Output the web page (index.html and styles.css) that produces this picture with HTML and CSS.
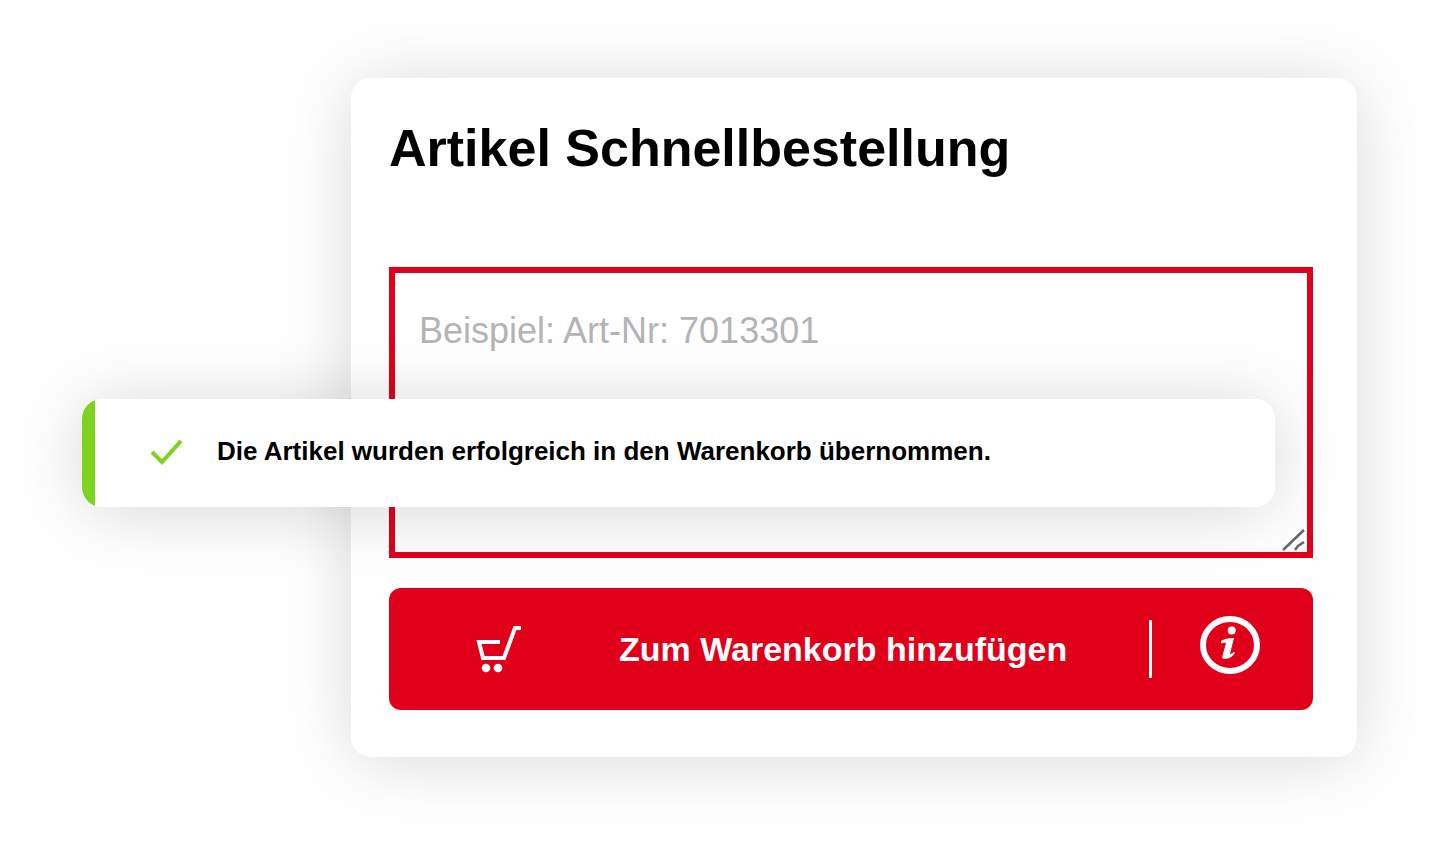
FILE: index.html
```html
<!DOCTYPE html>
<html lang="de">
<head>
  <meta charset="UTF-8">
  <meta name="viewport" content="width=device-width, initial-scale=1">
  <title>Artikel Schnellbestellung</title>

  <link rel="stylesheet" href="styles.css">
</head>
<body>
<main class="Page">
  <section class="OrderCard">
    <h1 class="OrderCard__Title"><label for="articles">Artikel Schnellbestellung</label></h1>

    <div class="OrderCard__Field">
      <textarea class="OrderCard__Input" id="articles" placeholder="Beispiel: Art-Nr: 7013301"></textarea>
      <svg class="OrderCard__Grip" width="24" height="24" viewBox="0 0 24 24" aria-hidden="true">
        <path d="M2 22L23 2M14 22L17 18L23 14"/>
      </svg>
    </div>

    <div class="OrderCard__Actions">
      <button class="OrderCard__Add" type="button">
        <svg class="OrderCard__Cart" width="46" height="48" viewBox="0 0 46 48" aria-hidden="true">
          <path d="M24 17H3L7 33H28L39 3H45"/>
          <circle cx="10" cy="43" r="4.300"/>
          <circle cx="22" cy="43" r="4.300"/>
        </svg>
        <span class="OrderCard__AddText">Zum Warenkorb hinzufügen</span>
      </button>
      <button class="OrderCard__Info" type="button" aria-label="Information">
        <svg width="60" height="60" viewBox="0 0 60 60" aria-hidden="true">
          <ellipse class="OrderCard__InfoRing" cx="30" cy="30" rx="27" ry="26"/>
          <circle cx="31.700" cy="15.500" r="4"/>
          <path d="M21 26C24 24 28 23 34 23L30 39C32 39 33 37 35 37C34 41 29 44 25 44C22 44 22 42 23 39L26 28C24 27 22 29 21 28Z"/>
        </svg>
      </button>
    </div>

    <!-- Success message, floats over the order form. -->
    <div class="Toast" role="status">
      <svg class="Toast__Check" width="34" height="26" viewBox="0 0 34 26" aria-hidden="true">
        <path d="M2 12L12 22L31 1"/>
      </svg>
      <span class="Toast__Text">Die Artikel wurden erfolgreich in den Warenkorb übernommen.</span>
    </div>
  </section>
</main>
</body>
</html>
```
FILE: styles.css
```css
html, body {
  padding: 0;
  margin: 0;
  background-color: #ffffff;
  font-family: "Liberation Sans", Arial, sans-serif;
}

.Page {
  padding: 78px 83px 80px 351px;
}

.OrderCard {
  position: relative;
  padding: 34px 44px 47px 38px;
  background-color: #ffffff;
  border-radius: 20px;
  box-shadow: 0 4px 72px rgba(0, 0, 0, 0.15);
}

.OrderCard__Title {
  margin: 0 0 83px;
  font-size: 52px;
  line-height: 72px;
  font-weight: 700;
  color: #000000;
}

.OrderCard__Field {
  position: relative;
  margin-bottom: 30px;
}

.OrderCard__Input {
  display: block;
  box-sizing: border-box;
  width: 100%;
  height: 291px;
  padding: 37px 24px;
  border: 6px solid #e1001a;
  border-radius: 0;
  background-color: #ffffff;
  font-family: inherit;
  font-size: 36px;
  line-height: 42px;
  resize: none;
}

.OrderCard__Input::placeholder {
  color: #b4b4b4;
  opacity: 1;
}

.OrderCard__Grip {
  position: absolute;
  right: 8px;
  bottom: 6px;
  fill: none;
  stroke: #666666;
  stroke-width: 2.5;
}

.OrderCard__Actions {
  display: flex;
  align-items: center;
  height: 122px;
  background-color: #e1001a;
  border-radius: 12px;
}

.OrderCard__Add,
.OrderCard__Info {
  display: flex;
  align-items: center;
  border: 0;
  background: none;
  color: #ffffff;
  font-family: inherit;
  cursor: pointer;
}

.OrderCard__Add {
  flex: 1;
  height: 100%;
  padding: 0 82px 0 87px;
}

.OrderCard__Cart {
  flex: none;
  fill: #ffffff;
}

.OrderCard__Cart path {
  fill: none;
  stroke: #ffffff;
  stroke-width: 4;
}

.OrderCard__AddText {
  flex: 1;
  padding-left: 97px;
  font-size: 34px;
  line-height: 40px;
  font-weight: 700;
  text-align: left;
  white-space: nowrap;
}

.OrderCard__Info {
  height: 58px;
  padding: 0 53px 8px 48px;
  border-left: 3px solid #ffffff;
  fill: #ffffff;
}

.OrderCard__InfoRing {
  fill: none;
  stroke: #ffffff;
  stroke-width: 6;
}

.Toast {
  position: absolute;
  top: 321px;
  right: 82px;
  left: -269px;
  display: flex;
  align-items: center;
  box-sizing: border-box;
  height: 108px;
  padding: 0 68px;
  background: linear-gradient(to right, #7ed321 13px, #ffffff 13px);
  border-radius: 20px;
  box-shadow: 0 4px 72px rgba(0, 0, 0, 0.16);
}

.Toast__Check {
  flex: none;
  fill: none;
  stroke: #7ed321;
  stroke-width: 4;
}

.Toast__Text {
  padding-left: 33px;
  padding-bottom: 4px;
  font-size: 26px;
  line-height: 32px;
  font-weight: 700;
  color: #000000;
}
```
